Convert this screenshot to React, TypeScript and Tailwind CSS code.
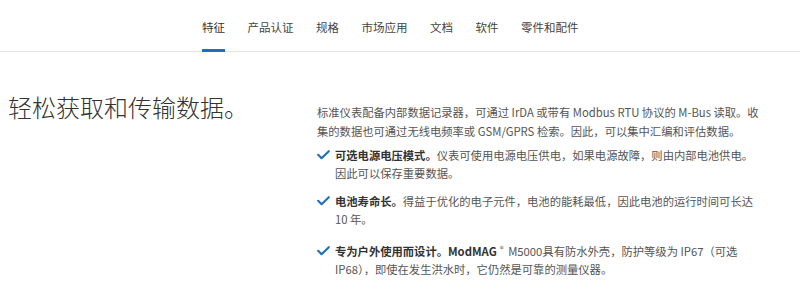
const tabs = ["特征", "产品认证", "规格", "市场应用", "文档", "软件", "零件和配件"];

function Check() {
  return (
    <svg width="13" height="10" viewBox="0 0 13 10" fill="none" className="mt-[4px] shrink-0">
      <path d="M1.2 4.8 L4.6 8.2 L11.8 1.2" stroke="#1f6fc0" strokeWidth="2.1" strokeLinecap="round" strokeLinejoin="round" />
    </svg>
  );
}

function Feature({ title, children, className = "" }: { title: React.ReactNode; children: React.ReactNode; className?: string }) {
  return (
    <li className={`flex ${className}`}>
      <div className="w-[18px] shrink-0">
        <Check />
      </div>
      <p className="w-[422px]">
        <b className="font-bold text-[#333]">{title}</b>
        {children}
      </p>
    </li>
  );
}

export default function App() {
  return (
    <div
      className="w-[800px] h-[305px] bg-white overflow-hidden text-[#555]"
      style={{ fontFamily: '"Noto Sans CJK SC", "Liberation Sans", sans-serif' }}
    >
      <nav className="flex h-[52px] border-b border-[#e3e3e3] pl-[202px] gap-[22.5px] text-[11.5px] text-[#444]">
        {tabs.map((t, i) => (
          <div
            key={t}
            className={`h-[52px] flex items-center pt-[6px] border-b-[3px] ${i === 0 ? "border-[#1f6fc0] text-[#333]" : "border-transparent"}`}
          >
            {t}
          </div>
        ))}
      </nav>

      <div className="flex pt-[39px]">
        <div className="w-[317px] pl-[8px]">
          <h1 className="text-[24px] leading-[32px] text-[#333] font-light">轻松获取和传输数据。</h1>
        </div>
        <div className="w-[445px] pt-[12px] text-[11.3px] leading-[19px]">
          <p className="w-[442px]">
            标准仪表配备内部数据记录器，可通过 IrDA 或带有 Modbus RTU 协议的 M-Bus 读取。收集的数据也可通过无线电频率或 GSM/GPRS 检索。因此，可以集中汇编和评估数据。
          </p>
          <ul className="mt-[5px] leading-[18px]">
            <Feature title="可选电源电压模式。" className="mb-[10px]">
              仪表可使用电源电压供电，如果电源故障，则由内部电池供电。因此可以保存重要数据。
            </Feature>
            <Feature title="电池寿命长。" className="mb-[14px]">
              得益于优化的电子元件，电池的能耗最低，因此电池的运行时间可长达 10 年。
            </Feature>
            <Feature
              title={
                <>
                  专为户外使用而设计。ModMAG<sup className="text-[8px] font-normal text-[#555] ml-[3px] mr-[2px]">®</sup>
                </>
              }
            >
              {" "}M5000具有防水外壳，防护等级为 IP67（可选IP68），即使在发生洪水时，它仍然是可靠的测量仪器。
            </Feature>
          </ul>
        </div>
      </div>
    </div>
  );
}
